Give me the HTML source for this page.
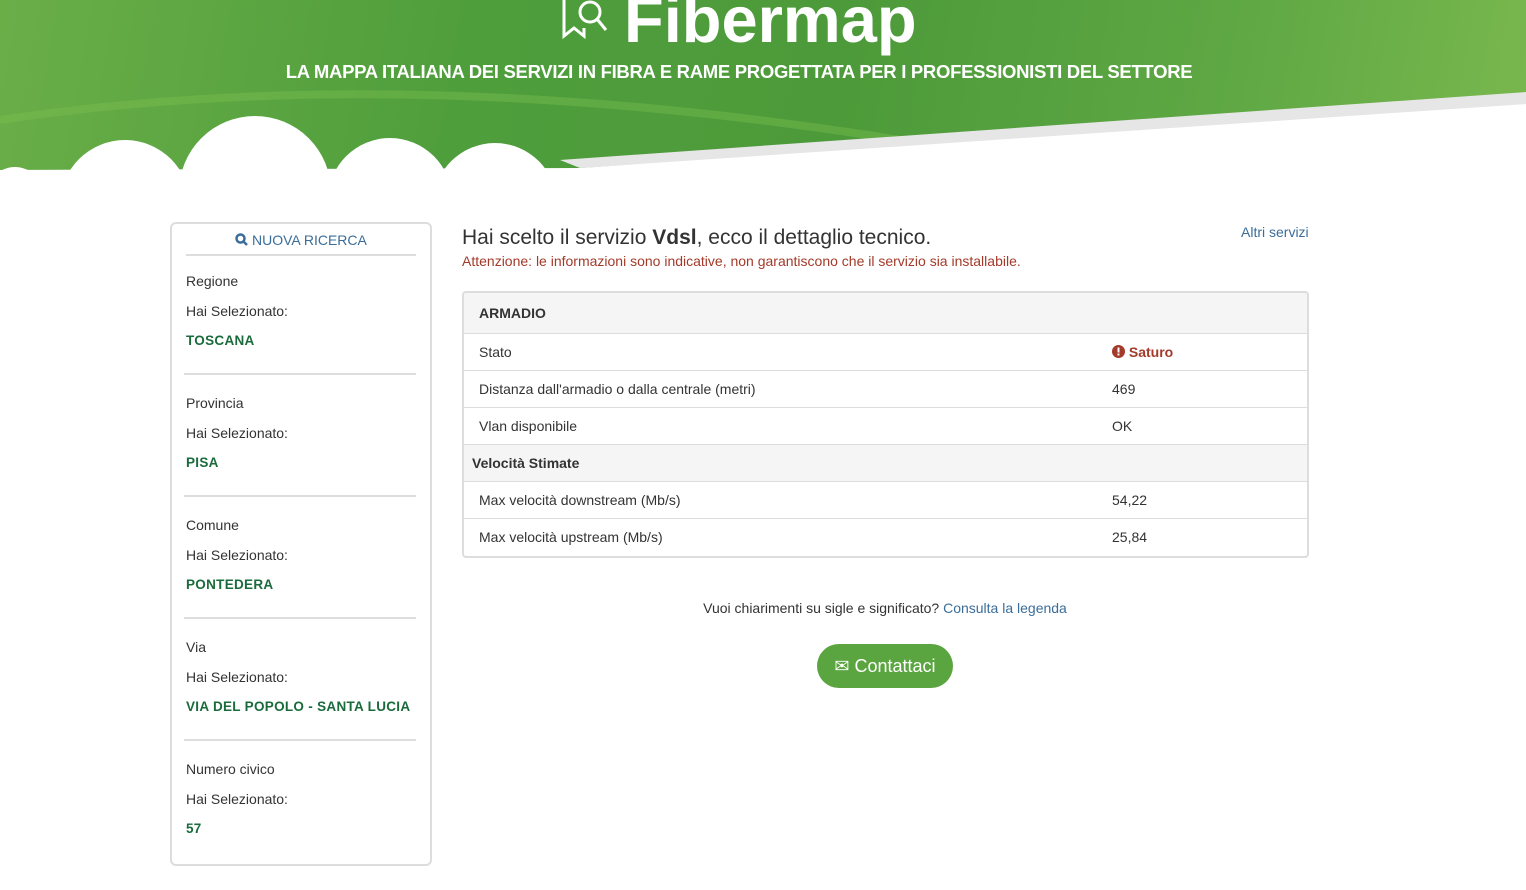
<!DOCTYPE html>
<html><head><meta charset="utf-8"><style>
body{margin:0;width:1526px;height:890px;background:#fff;font-family:"Liberation Sans",Arial,sans-serif;color:#333;position:relative;overflow:hidden}
.hdr{position:absolute;left:0;top:0;width:1526px;height:200px;background:linear-gradient(100deg,#6aae48 0%,#4f9e3c 30%,#4d9a3a 55%,#5fa844 80%,#7ab84e 100%)}
.logo{position:absolute;left:624px;top:-18px;color:#fff;font-weight:bold;font-size:65px;letter-spacing:0px}
.tag{position:absolute;left:0;width:1478px;text-align:center;top:61px;color:#fff;font-weight:bold;font-size:18.5px;letter-spacing:-0.3px}
.side{position:absolute;left:170px;top:222px;width:262px;height:644px;border:2px solid #ddd;border-radius:6px;box-sizing:border-box}
.nr{text-align:center;color:#3a6d9a;font-size:14px;margin:8px 14px 0;padding-bottom:6px;border-bottom:2px solid #ddd}
.sec{padding:0 14px 0 12px;font-size:14px}
.sec div{height:30px;line-height:30px;padding-left:2px}
.sec .v{color:#1a6b3c;font-weight:bold;font-size:13.5px;letter-spacing:.3px}
.sec hr{border:0;border-top:2px solid #ddd;margin:17px 0 13px}
.t1{position:absolute;left:462px;top:226px;font-size:21px;color:#333}
.t2{position:absolute;left:462px;top:253px;font-size:14px;color:#a33a2a}
.alt{position:absolute;left:1241px;top:224px;font-size:14px;color:#3a6d9a}
.tbl{position:absolute;left:462px;top:291px;width:847px;height:267px;border:2px solid #ddd;border-radius:4px;box-sizing:border-box;overflow:hidden}
.r{height:36px;border-top:1px solid #ddd;font-size:14px;line-height:36px;position:relative;padding-left:15px}
.r span{position:absolute;left:648px}
.h{background:#f5f5f5;font-weight:bold}
.q{position:absolute;left:0;width:1770px;text-align:center;top:600px;font-size:14px}
.btn{position:absolute;left:817px;top:644px;width:136px;height:44px;border-radius:22px;background:#5aa53f;color:#fff;font-size:18px;line-height:44px;text-align:center}
</style></head><body>
<div class="hdr">
<svg width="1526" height="200" style="position:absolute;left:0;top:0">
<path d="M0 120 Q400 60 900 140" stroke="#7cc050" stroke-width="8" fill="none" opacity=".4"/>
<path d="M560 160 L1526 92 L1526 108 L580 168 Z" fill="#e6e6e6"/>
<path d="M580 168 L1526 104 L1526 200 L0 200 L0 170 Z" fill="#fff"/>
<circle cx="15" cy="195" r="28" fill="#fff"/>
<circle cx="125" cy="205" r="65" fill="#fff"/>
<circle cx="255" cy="192" r="76" fill="#fff"/>
<circle cx="390" cy="200" r="62" fill="#fff"/>
<circle cx="495" cy="205" r="62" fill="#fff"/>
</svg>
<svg width="60" height="46" style="position:absolute;left:560px;top:-6px" fill="none" stroke="#fff" stroke-width="3"><path d="M4 2 V42 L14 34 L24 42 V34"/><circle cx="30" cy="18" r="10"/><path d="M37 25 L46 36"/><path d="M22 4 V2 M40 4 V2"/></svg>
<div class="logo">Fibermap</div>
<div class="tag">LA MAPPA ITALIANA DEI SERVIZI IN FIBRA E RAME PROGETTATA PER I PROFESSIONISTI DEL SETTORE</div>
</div>
<div class="side">
<div class="nr"><svg width="13" height="13" style="vertical-align:-1px" fill="none" stroke="#3a6d9a" stroke-width="2.5"><circle cx="5.5" cy="5.5" r="4"/><path d="M8.5 8.5 L12 12"/></svg> NUOVA RICERCA</div>
<div class="sec" style="margin-top:10px">
<div>Regione</div><div>Hai Selezionato:</div><div class="v">TOSCANA</div><hr>
<div>Provincia</div><div>Hai Selezionato:</div><div class="v">PISA</div><hr>
<div>Comune</div><div>Hai Selezionato:</div><div class="v">PONTEDERA</div><hr>
<div>Via</div><div>Hai Selezionato:</div><div class="v">VIA DEL POPOLO - SANTA LUCIA</div><hr>
<div>Numero civico</div><div>Hai Selezionato:</div><div class="v">57</div>
</div></div>
<div class="t1">Hai scelto il servizio <b>Vdsl</b>, ecco il dettaglio tecnico.</div>
<div class="t2">Attenzione: le informazioni sono indicative, non garantiscono che il servizio sia installabile.</div>
<div class="alt">Altri servizi</div>
<div class="tbl">
<div class="r h" style="border-top:0;height:40px;line-height:40px">ARMADIO</div>
<div class="r">Stato<span style="color:#a33a2a;font-weight:bold"><svg width="13" height="13" style="vertical-align:-1px"><circle cx="6.5" cy="6.5" r="6.5" fill="#a33a2a"/><rect x="5.5" y="2.5" width="2" height="5" fill="#fff"/><rect x="5.5" y="8.5" width="2" height="2" fill="#fff"/></svg> Saturo</span></div>
<div class="r">Distanza dall'armadio o dalla centrale (metri)<span>469</span></div>
<div class="r">Vlan disponibile<span>OK</span></div>
<div class="r h" style="padding-left:8px">Velocità Stimate</div>
<div class="r">Max velocità downstream (Mb/s)<span>54,22</span></div>
<div class="r">Max velocità upstream (Mb/s)<span>25,84</span></div>
</div>
<div class="q">Vuoi chiarimenti su sigle e significato? <span style="color:#3a6d9a">Consulta la legenda</span></div>
<div class="btn">✉ Contattaci</div>
</body></html>
